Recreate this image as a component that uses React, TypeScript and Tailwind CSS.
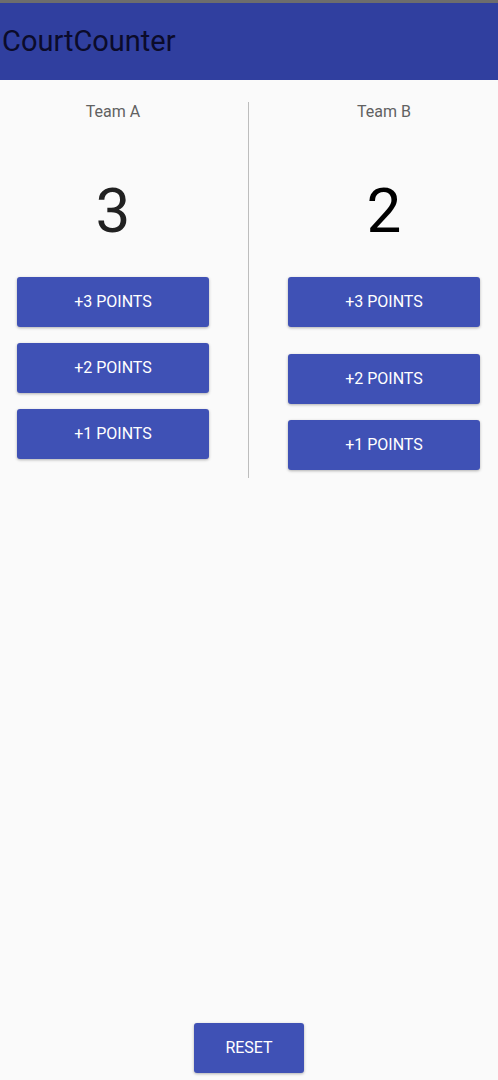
const font = { fontFamily: "Roboto, 'Noto Sans', sans-serif" };

function PointButton({ label }: { label: string }) {
  return (
    <button className="flex h-[50px] w-[192px] items-center justify-center rounded-[3px] bg-[#3f51b5] text-[16px] text-white shadow-[0_1px_3px_rgba(0,0,0,0.3)]">
      {label}
    </button>
  );
}

function TeamColumn({
  name,
  score,
  scoreColor,
  gaps,
}: {
  name: string;
  score: number;
  scoreColor: string;
  gaps: [string, string];
}) {
  return (
    <div className="flex flex-col items-center">
      <div className="mt-[21px] h-[22px] text-[16px] leading-[22px] text-[#616161]">{name}</div>
      <div className={`mt-[50px] h-[76px] text-[62px] leading-[76px] ${scoreColor}`}>{score}</div>
      <div className="mt-[28px] flex flex-col">
        <PointButton label="+3 POINTS" />
        <div className={gaps[0]} />
        <PointButton label="+2 POINTS" />
        <div className={gaps[1]} />
        <PointButton label="+1 POINTS" />
      </div>
    </div>
  );
}

export default function App() {
  return (
    <div className="flex min-h-[1080px] flex-col bg-[#fafafa]" style={font}>
      <div className="h-[3px] bg-[#6d6d6d]" />
      <header className="flex h-[77px] items-center bg-[#303f9f] pl-[2px]">
        <h1 className="text-[29px] text-[#0b0b2a]">CourtCounter</h1>
      </header>

      <div className="flex">
        <div className="w-[226px]">
          <TeamColumn name="Team A" score={3} scoreColor="text-[#212121]" gaps={["h-[16px]", "h-[16px]"]} />
        </div>
        <div className="ml-[22px] mt-[22px] h-[376px] w-px bg-[#bdbdbd]" />
        <div className="ml-[21px] w-[228px]">
          <TeamColumn name="Team B" score={2} scoreColor="text-black" gaps={["h-[27px]", "h-[16px]"]} />
        </div>
      </div>

      <div className="mt-auto flex justify-center pb-[7px]">
        <button className="flex h-[50px] w-[110px] items-center justify-center rounded-[3px] bg-[#3f51b5] text-[16px] text-white shadow-[0_1px_3px_rgba(0,0,0,0.3)]">
          RESET
        </button>
      </div>
    </div>
  );
}
